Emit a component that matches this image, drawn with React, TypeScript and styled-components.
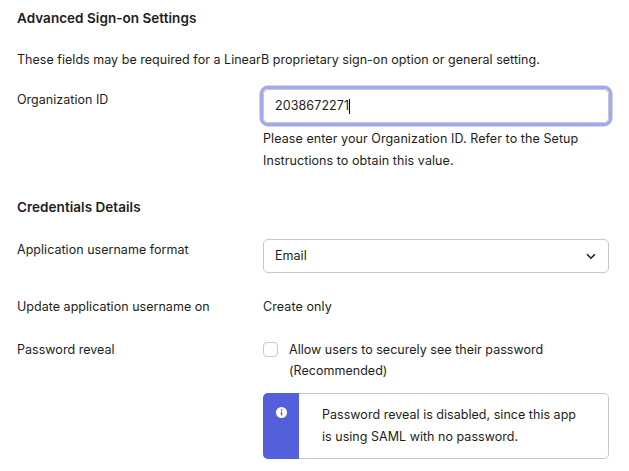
import React from "react";
import styled, { createGlobalStyle } from "styled-components";

const Colors = {
  text: "#1d1d21",
  border: "#c8c8c8",
  primary: "#545fdc",
  focus: "#a2a9ee",
};

const App = () => {
  return (
    <>
      <GlobalStyle />
      <Page>
        <Title>Advanced Sign-on Settings</Title>
        <Description>These fields may be required for a LinearB proprietary sign-on option or general setting.</Description>
        <Row height={109}>
          <Label>Organization ID</Label>
          <Field>
            <InputBox>2038672271<Caret /></InputBox>
            <Help>
              Please enter your Organization ID. Refer to the Setup<br />
              Instructions to obtain this value.
            </Help>
          </Field>
        </Row>
        <Title>Credentials Details</Title>
        <Row height={57} margin="21px 0 0">
          <Label>Application username format</Label>
          <Field>
            <SelectBox>
              Email
              <Chevron viewBox="0 0 10 7">
                <path d="M1 1.2 L5 5.3 L9 1.2" />
              </Chevron>
            </SelectBox>
          </Field>
        </Row>
        <Row height={43}>
          <Label>Update application username on</Label>
          <Value>Create only</Value>
        </Row>
        <Row height={111}>
          <Label>Password reveal</Label>
          <Field>
            <CheckRow>
              <CheckBox />
              <CheckText>
                Allow users to securely see their password<br />
                (Recommended)
              </CheckText>
            </CheckRow>
            <Callout>
              <CalloutSide>
                <svg width="11" height="11" viewBox="0 0 11 11">
                  <circle cx="5.5" cy="5.5" r="5.5" fill="white" />
                  <path d="M4.8 2.3h1.5v1.4H4.8zM4.8 4.7h1.5v3.8H4.8z" fill={Colors.primary} />
                </svg>
              </CalloutSide>
              <CalloutText>
                Password reveal is disabled, since this app<br />
                is using SAML with no password.
              </CalloutText>
            </Callout>
          </Field>
        </Row>
      </Page>
    </>
  );
};

export default App;

interface row {
  height: number;
  margin?: string;
}

const GlobalStyle = createGlobalStyle`
  * {
    box-sizing: border-box;
  }
  body {
    margin: 0;
    background-color: white;
    overflow: hidden;
  }
`
const Page = styled.div`
  width: 629px;
  height: 471px;
  padding: 8px 20px 0 17px;
  font-family: Inter, "Liberation Sans", sans-serif;
  font-size: 12.5px;
  line-height: 22px;
  letter-spacing: 0.03px;
  color: ${Colors.text};
  white-space: nowrap;
`
const Title = styled.h2`
  margin: 0;
  height: 20px;
  font-size: 13.5px;
  font-weight: 600;
  line-height: 20px;
  letter-spacing: 0.04px;
`
const Description = styled.p`
  margin: 21px 0 17px;
`
const Row = styled.div<row>`
  display: grid;
  grid-template-columns: 246px 346px;
  height: ${props => props.height}px;
  margin: ${props => props.margin ?? "0"};
`
const Label = styled.div`
  padding-top: 1px;
`
const Value = styled.div`
  padding-top: 1px;
  letter-spacing: 0.1px;
`
const Field = styled.div`
  display: flex;
  flex-direction: column;
  padding-top: 1px;
`
const InputBox = styled.div`
  display: flex;
  align-items: center;
  height: 34px;
  padding: 0 11px;
  border: 1px solid ${Colors.border};
  border-radius: 5px;
  box-shadow: 0 0 0 3.5px ${Colors.focus};
  letter-spacing: 0.1px;
`
const Caret = styled.span`
  width: 1px;
  height: 15px;
  background-color: black;
`
const Help = styled.div`
  margin-top: 5px;
  letter-spacing: 0.08px;
`
const SelectBox = styled.div`
  display: flex;
  align-items: center;
  justify-content: space-between;
  height: 34px;
  padding: 0 12px 0 11px;
  border: 1px solid ${Colors.border};
  border-radius: 5px;
`
const Chevron = styled.svg`
  width: 10px;
  height: 7px;
  fill: none;
  stroke: ${Colors.text};
  stroke-width: 1.5;
`
const CheckRow = styled.div`
  display: flex;
  gap: 11px;
`
const CheckBox = styled.span`
  width: 15px;
  height: 15px;
  margin-top: 3px;
  border: 1px solid ${Colors.border};
  border-radius: 4px;
`
const CheckText = styled.div`
  line-height: 21px;
`
const Callout = styled.div`
  display: flex;
  height: 66px;
  margin-top: 12px;
  border: 1px solid ${Colors.border};
  border-left: 0;
  border-radius: 5px;
`
const CalloutSide = styled.div`
  display: flex;
  justify-content: center;
  width: 36px;
  margin: -1px 0;
  padding-top: 14px;
  border-radius: 5px 0 0 5px;
  background-color: ${Colors.primary};
`
const CalloutText = styled.div`
  padding: 10px 0 0 23px;
`
